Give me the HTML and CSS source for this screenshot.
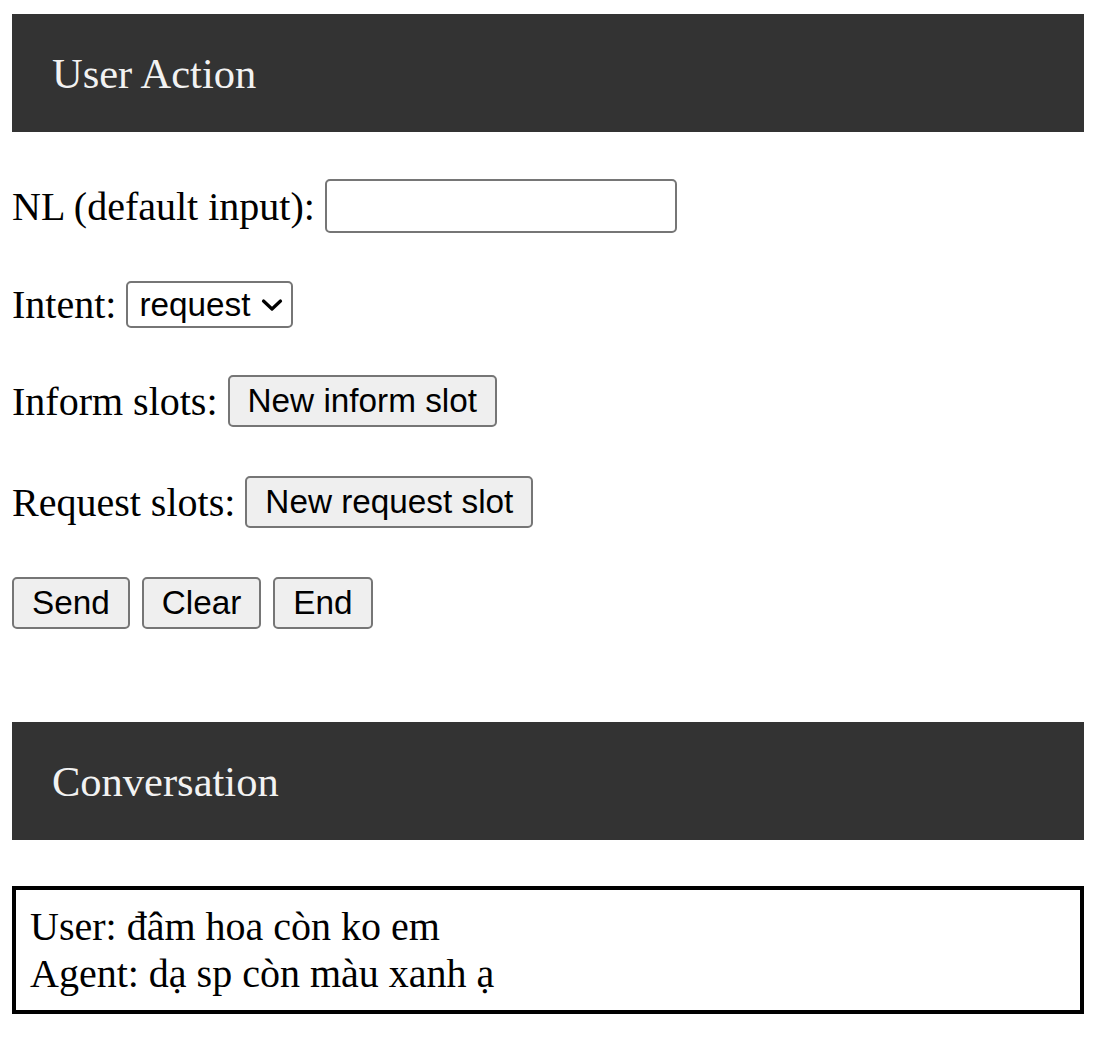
FILE: index.html
```html
<!DOCTYPE html>
<html>
<head>
<meta charset="utf-8">
<title>User Action</title>
<link rel="stylesheet" href="styles.css">
</head>
<body>
<div class="page">
  <h2 class="section-title">User Action</h2>
  <div class="form">
    <div class="row">
      <label class="label" for="nl">NL (default input):</label>
      <input class="text-input" id="nl" type="text">
    </div>
    <div class="row">
      <label class="label" for="intent">Intent:</label>
      <span class="select-wrap">
        <select class="select" id="intent">
          <option>request</option>
          <option>inform</option>
        </select>
        <svg class="chevron" width="22" height="14" viewBox="0 0 22 14"><path d="M2.5 3 L11 11 L19.5 3" fill="none" stroke="#000" stroke-width="3.2" stroke-linecap="round" stroke-linejoin="round"/></svg>
      </span>
    </div>
    <div class="row row-slot">
      <span class="label">Inform slots:</span>
      <button class="btn" type="button">New inform slot</button>
    </div>
    <div class="row row-wide">
      <span class="label">Request slots:</span>
      <button class="btn" type="button">New request slot</button>
    </div>
    <div class="row row-wide actions">
      <button class="btn" type="button">Send</button>
      <button class="btn" type="button">Clear</button>
      <button class="btn" type="button">End</button>
    </div>
  </div>
  <h2 class="section-title conv-title">Conversation</h2>
  <div class="conversation">
    <div class="msg">User: đâm hoa còn ko em</div>
    <div class="msg">Agent: dạ sp còn màu xanh ạ</div>
  </div>
</div>
</body>
</html>
```
FILE: styles.css
```css
html, body {
  margin: 0;
  padding: 0;
  background: #fff;
}

.page {
  padding: 14px 14px 0 12px;
  font-family: "Liberation Serif", "Times New Roman", serif;
  font-size: 40px;
  color: #000;
}

.section-title {
  margin: 0;
  height: 118px;
  box-sizing: border-box;
  padding: 0 40px;
  display: flex;
  align-items: center;
  background: #333333;
  color: #f2f2f2;
  font-weight: normal;
  font-size: 42.5px;
}

.form {
  display: flex;
  flex-direction: column;
  margin-top: 47px;
}

.row {
  display: flex;
  align-items: center;
  gap: 10px;
  height: 54px;
  margin-top: 44px;
}

.row:first-child {
  margin-top: 0;
}

.row-slot {
  margin-top: 43px;
}

.row-wide {
  margin-top: 47px;
}

.actions {
  gap: 12px;
}

.label {
  white-space: nowrap;
}

.text-input {
  width: 352px;
  height: 54px;
  box-sizing: border-box;
  border: 2px solid #767676;
  border-radius: 5px;
  margin: 0;
  padding: 0 8px;
  font-family: "Liberation Sans", Arial, sans-serif;
  font-size: 33px;
  background: #fff;
}

.select-wrap {
  position: relative;
  display: inline-flex;
}

.select {
  appearance: none;
  -webkit-appearance: none;
  width: 167px;
  height: 47px;
  box-sizing: border-box;
  border: 2px solid #767676;
  border-radius: 5px;
  margin: 0;
  padding: 0 0 0 11px;
  background: #fff;
  color: #000;
  font-family: "Liberation Sans", Arial, sans-serif;
  font-size: 33.3px;
}

.chevron {
  position: absolute;
  right: 10px;
  top: 17px;
  pointer-events: none;
}

.btn {
  height: 52px;
  box-sizing: border-box;
  margin: 0;
  padding: 0 18px;
  border: 2px solid #767676;
  border-radius: 5px;
  background: #efefef;
  color: #000;
  font-family: "Liberation Sans", Arial, sans-serif;
  font-size: 33.3px;
  white-space: nowrap;
}

.conv-title {
  margin-top: 92px;
}

.conversation {
  margin-top: 46px;
  border: 4px solid #000;
  padding: 13px 14px 13px;
  line-height: normal;
}
```
